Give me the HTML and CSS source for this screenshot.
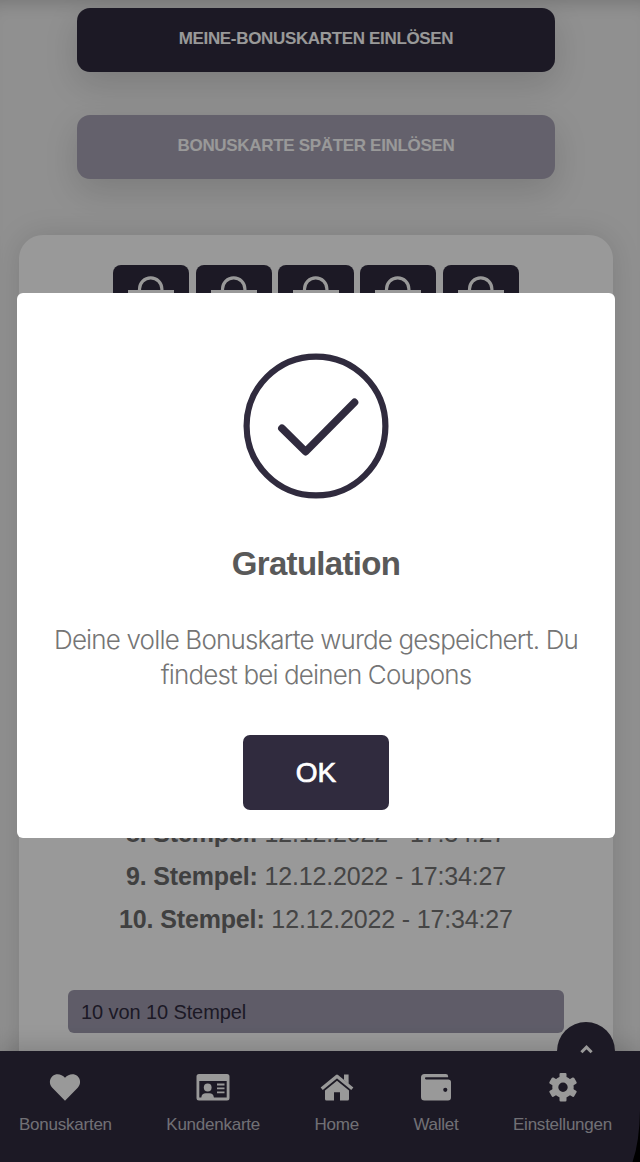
FILE: index.html
```html
<!DOCTYPE html>
<html lang="de">
<head>
<meta charset="utf-8">
<meta name="viewport" content="width=device-width, initial-scale=1">
<title>Bonuskarten</title>
<link rel="stylesheet" href="styles.css">
</head>
<body>
<svg class="defs" aria-hidden="true">
  <symbol id="bag" viewBox="0 0 76 76">
    <path d="M26.500 26v-2a11.200 11.200 0 0 1 22.400 0v2" fill="none" stroke="currentColor" stroke-width="3.200"/>
    <path d="M15 25h46v36H15z" fill="currentColor"/>
  </symbol>
</svg>
<div class="app">
  <main class="content">
    <div class="actions">
      <button class="action"><span class="t-redeem">MEINE-BONUSKARTEN EINLÖSEN</span></button>
      <button class="action action-muted"><span class="t-later">BONUSKARTE SPÄTER EINLÖSEN</span></button>
    </div>
    <section class="card">
      <div class="stamps">
        <svg class="stamp"><use href="#bag"/></svg><svg class="stamp"><use href="#bag"/></svg><svg class="stamp"><use href="#bag"/></svg><svg class="stamp"><use href="#bag"/></svg><svg class="stamp"><use href="#bag"/></svg>
        <svg class="stamp"><use href="#bag"/></svg><svg class="stamp"><use href="#bag"/></svg><svg class="stamp"><use href="#bag"/></svg><svg class="stamp"><use href="#bag"/></svg><svg class="stamp"><use href="#bag"/></svg>
      </div>
      <div class="log">
        <div><b>8. Stempel:</b> 12.12.2022 - 17:34:27</div>
        <div><b>9. Stempel:</b> 12.12.2022 - 17:34:27</div>
        <div><b>10. Stempel:</b> 12.12.2022 - 17:34:27</div>
      </div>
      <div class="progress">10 von 10 Stempel</div>
    </section>
  </main>
  <nav class="nav">
    <a class="item"><svg class="icon" viewBox="0 0 36 30"><path d="M18 28.700 5.300 15.800C1.800 12 2.400 7 5.600 4c3.200-2.900 9-2.500 12.400 1.800C21.400 1.500 27.200 1.100 30.400 4c3.200 3 3.800 8 .3 11.800z"/></svg><span>Bonuskarten</span></a>
    <a class="item"><svg class="icon" viewBox="0 0 36 30"><path fill-rule="evenodd" d="M4 2h28a2.500 2.500 0 0 1 2.500 2.500v21.500a2.500 2.500 0 0 1-2.500 2.500H4a2.500 2.500 0 0 1-2.500-2.500V4.500A2.500 2.500 0 0 1 4 2zM4.300 9v16.500h2c.3-3 2-4.300 4.500-4.300h3.600c2.500 0 4.200 1.300 4.500 4.300H31.700V9z"/><circle cx="12.700" cy="15.500" r="3.900"/><path d="M22 11.600h7.500v1.800H22zm0 3.900h7.500v1.800H22zm0 3.900h7.500v1.800H22z"/></svg><span>Kundenkarte</span></a>
    <a class="item"><svg class="icon" viewBox="0 0 36 30"><path d="M18 8.800 30 18.600v8.400a1.500 1.500 0 0 1-1.500 1.500h-7.500v-8.200h-6v8.200H7.500A1.500 1.500 0 0 1 6 27v-8.400z"/><path d="M25 8V2.500h4.600V12z"/><path d="M2.700 16.700 18 4.300l15.300 12.400" fill="none" stroke="currentColor" stroke-width="3.400" stroke-linejoin="round"/></svg><span>Home</span></a>
    <a class="item"><svg class="icon" viewBox="0 0 36 30"><path fill-rule="evenodd" d="M6.500 2h21.300A2.300 2.300 0 0 1 30.100 4.300v1H8a1 1 0 0 0 0 2.100h22.200a2.800 2.800 0 0 1 2.800 2.800v15.300a3 3 0 0 1-3 3H6.500a3.500 3.500 0 0 1-3.500-3.500V5.500A3.500 3.500 0 0 1 6.500 2zM27.300 15.700a2.100 2.100 0 1 0 0 4.200 2.100 2.100 0 0 0 0-4.200z"/></svg><span>Wallet</span></a>
    <a class="item"><svg class="icon" viewBox="0 0 36 30"><circle cx="18" cy="15.200" r="7.700" fill="none" stroke="currentColor" stroke-width="6"/><path id="teeth" d="M14.500 7V2.100q0-1.200 1.200-1.200h4.600q1.200 0 1.200 1.200V7zM14.500 23.400v4.900q0 1.200 1.200 1.200h4.600q1.200 0 1.200-1.200v-4.900z"/><use href="#teeth" transform="rotate(60 18 15.200)"/><use href="#teeth" transform="rotate(120 18 15.200)"/></svg><span>Einstellungen</span></a>
    <button class="to-top" aria-label="Nach oben"><svg viewBox="0 0 13 9"><path d="M1.400 7.300 6.500 2.200l5.100 5.100" fill="none" stroke="currentColor" stroke-width="3"/></svg></button>
  </nav>
  <svg class="corner" viewBox="0 0 8 52"><path d="M8 0Q7.500 32 .5 52H8z"/></svg>
  <div class="overlay">
    <div class="modal" role="dialog">
      <svg class="check" viewBox="0 0 146 146"><circle cx="73" cy="73" r="69.400" stroke-width="6.200"/><path d="m38.900 75.300 23.700 23.300 48.900-49.200" stroke-width="7.600" stroke-linecap="round" stroke-linejoin="round"/></svg>
      <h2 class="title">Gratulation</h2>
      <p class="message"><span class="m1">Deine volle Bonuskarte wurde gespeichert. Du</span><br><span class="m2">findest bei deinen Coupons</span></p>
      <button class="ok">OK</button>
    </div>
  </div>
</div>
</body>
</html>
```

FILE: styles.css
```css
* { box-sizing: border-box; }
body { margin: 0; font-family: "Liberation Sans", Arial, sans-serif; }
button { border: 0; font: inherit; padding: 0; }
.defs { position: absolute; width: 0; height: 0; }
.app { position: relative; width: 640px; height: 1162px; overflow: hidden; background: #f0f0f0; box-shadow: inset 0 16px 18px -14px rgba(0,0,0,.2); display: flex; flex-direction: column; }
.content { width: 632px; height: 1051px; flex: none; padding-top: 8px; }
.actions { width: 478px; margin: 0 auto; display: flex; flex-direction: column; gap: 43px; }
.action { height: 64px; padding-bottom: 3px; border-radius: 13px; background: #302b3e; color: #fff; font-weight: bold; font-size: 17px; white-space: nowrap; box-shadow: 0 12px 34px rgba(0,0,0,.14); }
.action-muted { background: #a7a2b4; }
.t-redeem { letter-spacing: -.34px; }
.t-later { letter-spacing: -.32px; }
.card { width: 594px; height: 930px; margin: 56px auto 0; padding: 30px 49px; border-radius: 24px; background: #fff; box-shadow: 0 0 30px rgba(0,0,0,.12); }
.stamps { display: grid; grid-template-columns: repeat(5, 76px); gap: 6.4px; justify-content: center; }
.stamp { width: 76px; height: 76px; border-radius: 8px; background: #302b3e; color: #fff; }
.log { margin-top: 389px; font-size: 25px; line-height: 43px; letter-spacing: -.15px; color: #747474; text-align: center; white-space: nowrap; }
.log b { color: #6b6b6b; }
.progress { margin-top: 49px; height: 43px; border-radius: 6px; padding-left: 13px; background: #9e9aae; color: #302b3e; font-size: 20px; line-height: 44px; letter-spacing: -.1px; }
.nav { position: relative; z-index: 1; flex: none; height: 111px; padding: 21px 28px 0 19px; display: flex; justify-content: space-between; background: #302b3e; box-shadow: 0 -4px 22px rgba(0,0,0,.16); }
.item { display: flex; flex-direction: column; align-items: center; color: #fff; font-size: 17px; line-height: 20px; }
.item span { margin-top: 13px; color: #bdbbc4; letter-spacing: -.24px; }
.icon { width: 36px; height: 30px; fill: currentColor; overflow: visible; }
.to-top { position: absolute; top: -29px; right: 25px; width: 58px; height: 58px; border-radius: 50%; background: #302b3e; color: #fff; display: flex; justify-content: center; align-items: center; padding-bottom: 4px; }
.to-top svg { width: 13px; height: 9px; }
.overlay { position: absolute; inset: 0; z-index: 2; padding: 293px 25px 0 17px; background: rgba(0,0,0,.4); }
.corner { position: absolute; z-index: 2; right: 0; bottom: 0; width: 8px; height: 52px; }
.modal { height: 545px; border-radius: 6px; background: #fff; display: flex; flex-direction: column; align-items: center; padding-top: 60px; }
.check { width: 146px; height: 146px; flex: none; fill: none; stroke: #302b3e; }
.title { margin: 45px 0 0; color: #595959; font-size: 33px; line-height: 40px; letter-spacing: -.7px; }
.message { margin: 38px 0 0; text-align: center; white-space: nowrap; font: 300 26px/35px Inter, "Liberation Sans", sans-serif; color: #757575; }
.m1 { letter-spacing: -.84px; }
.m2 { letter-spacing: -.86px; }
.ok { margin-top: 43px; width: 146px; height: 75px; border-radius: 7px; background: #302b3e; color: #fff; font-size: 28px; -webkit-text-stroke: .7px #fff; }
```
